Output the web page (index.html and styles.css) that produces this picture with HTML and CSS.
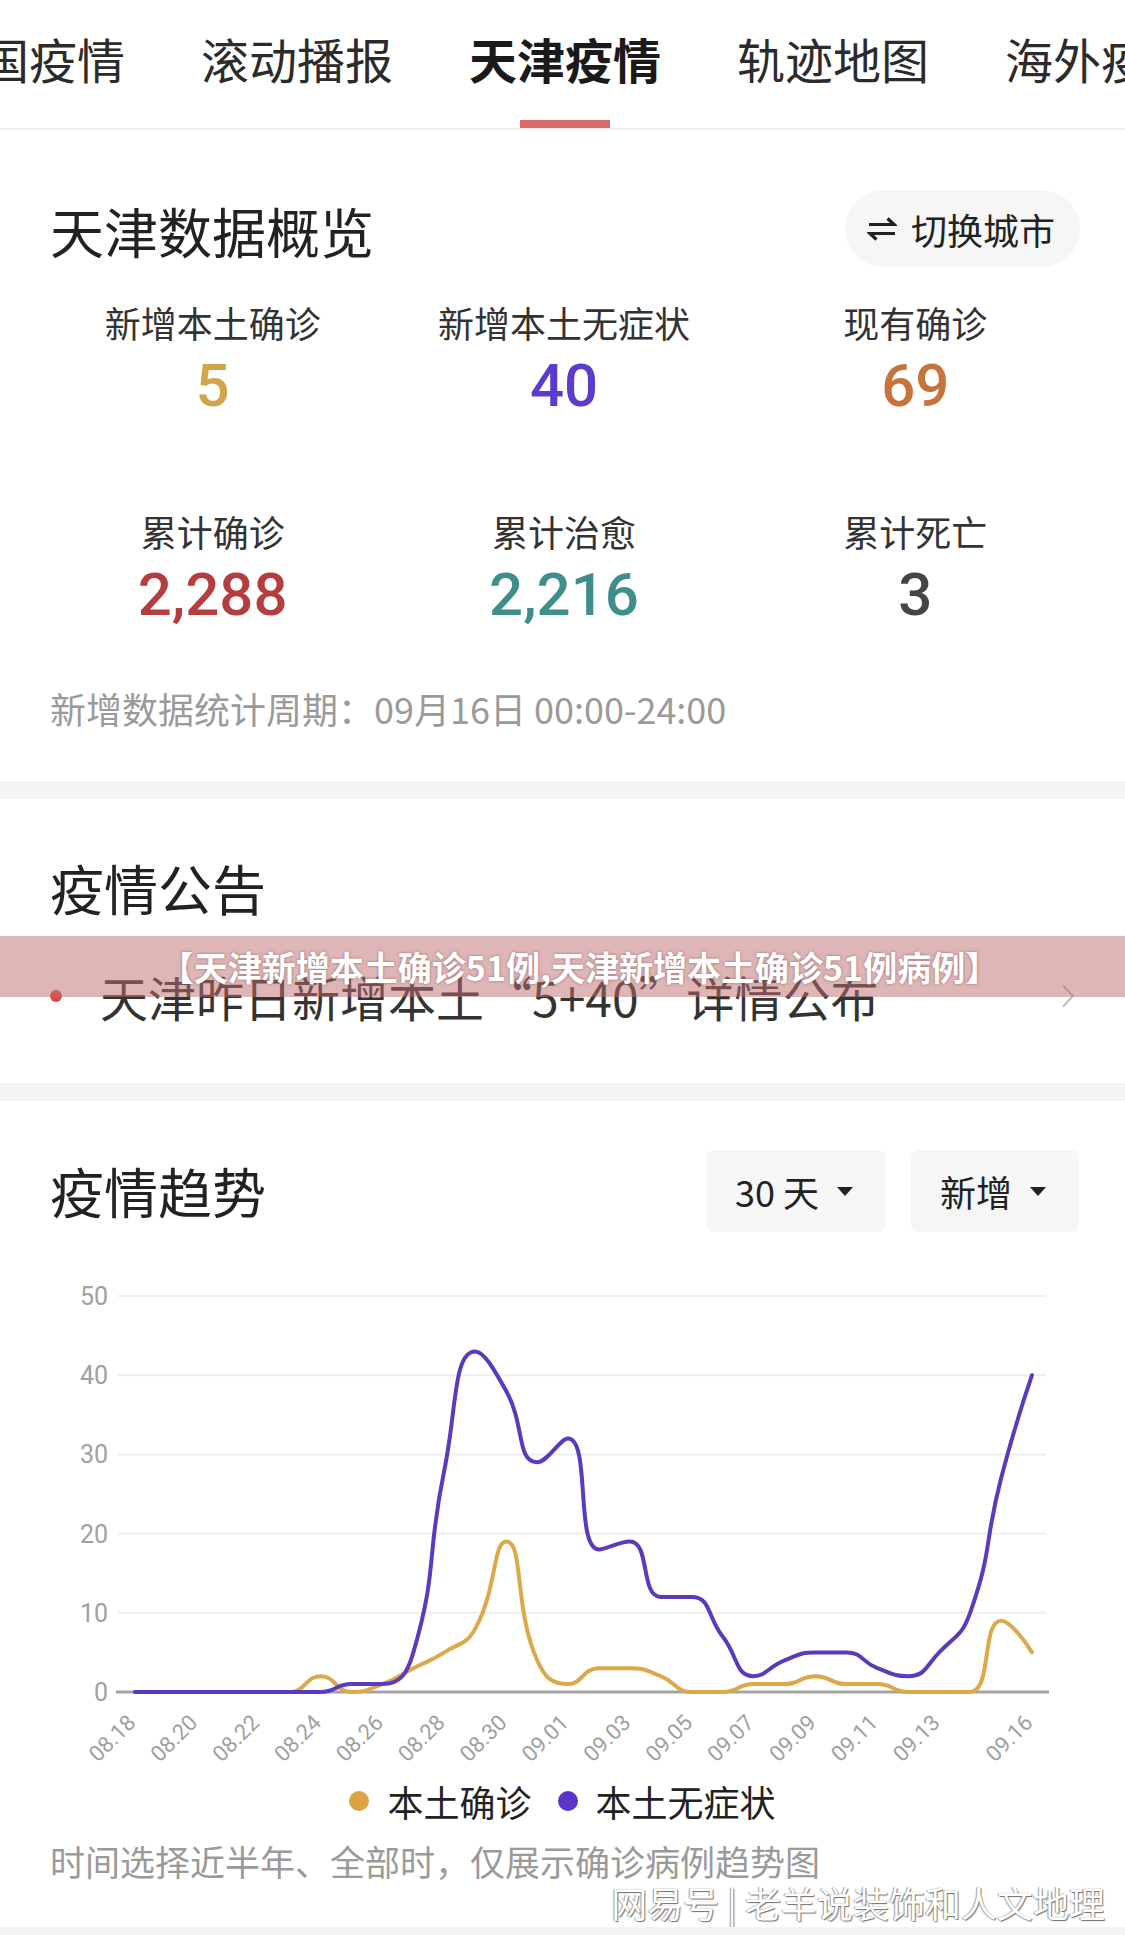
FILE: index.html
```html
<!DOCTYPE html>
<html lang="zh-CN">
<head>
    <meta charset="UTF-8">
    <meta name="viewport" content="width=device-width, initial-scale=1.0">
    <title>天津疫情</title>
    <link rel="stylesheet" href="styles.css">
</head>
<body>
<div class="page">
    <nav class="tabs">
        <div class="tab-row">
            <a class="tab">全国疫情</a>
            <a class="tab">滚动播报</a>
            <a class="tab active">天津疫情</a>
            <a class="tab">轨迹地图</a>
            <a class="tab">海外疫情</a>
        </div>
    </nav>

    <section class="card overview">
        <div class="card-head">
            <h2 class="card-title">天津数据概览</h2>
            <button class="switch-city">
                <svg class="switch-icon" viewBox="0 0 30 24" width="30" height="24">
                    <path d="M2 7.5 H27 L20.5 1.5" />
                    <path d="M28 16.5 H3 L9.5 22.5" />
                </svg>
                切换城市
            </button>
        </div>
        <div class="stats">
            <div class="stat"><div class="stat-label">新增本土确诊</div><div class="stat-num gold">5</div></div>
            <div class="stat"><div class="stat-label">新增本土无症状</div><div class="stat-num purple">40</div></div>
            <div class="stat"><div class="stat-label">现有确诊</div><div class="stat-num orange">69</div></div>
            <div class="stat"><div class="stat-label">累计确诊</div><div class="stat-num red">2,288</div></div>
            <div class="stat"><div class="stat-label">累计治愈</div><div class="stat-num teal">2,216</div></div>
            <div class="stat"><div class="stat-label">累计死亡</div><div class="stat-num dark">3</div></div>
        </div>
        <p class="period">新增数据统计周期：09月16日 00:00-24:00</p>
    </section>

    <section class="card notice">
        <h2 class="card-title">疫情公告</h2>
        <a class="notice-item">
            <span class="notice-dot"></span>
            <span class="notice-text">天津昨日新增本土“5+40”详情公布</span>
            <svg class="chevron" viewBox="0 0 14 24" width="14" height="24">
                <path d="M2 1.5 L12 12 L2 22.5" />
            </svg>
        </a>
    </section>

    <section class="card trend">
        <div class="card-head">
            <h2 class="card-title">疫情趋势</h2>
            <div class="selects">
                <button class="select">30 天 <i class="caret"></i></button>
                <button class="select">新增 <i class="caret"></i></button>
            </div>
        </div>
        <svg id="chart" class="chart" viewBox="0 0 1125 520" width="1125" height="520"></svg>
        <div class="legend">
            <span class="legend-item"><i class="legend-dot gold-bg"></i>本土确诊</span>
            <span class="legend-item"><i class="legend-dot purple-bg"></i>本土无症状</span>
        </div>
        <p class="trend-note">时间选择近半年、全部时，仅展示确诊病例趋势图</p>
    </section>

    <div class="banner">【天津新增本土确诊51例,天津新增本土确诊51例病例】</div>
    <div class="watermark">网易号 | 老羊说装饰和人文地理</div>
</div>

<script>
    var confirmed = [0,0,0,0,0,0,2,0,1,3,5,8,19,4,1,3,3,2,0,0,1,1,2,1,1,0,0,0,9,5];
    var asymptomatic = [0,0,0,0,0,0,0,1,1,5,28,43,38,29,32,18,19,12,12,7,2,4,5,5,3,2,5,10,27,40];

    var svg = document.getElementById('chart');
    var NS = 'http://www.w3.org/2000/svg';
    var x0 = 135, step = (1032 - 135) / 29, y0 = 436, unit = 7.92;

    function px(i) { return x0 + i * step; }
    function py(v) { return y0 - v * unit; }
    function pad(n) { return n < 10 ? '0' + n : '' + n; }

    function el(tag, attrs, text) {
        var node = document.createElementNS(NS, tag);
        for (var k in attrs) node.setAttribute(k, attrs[k]);
        if (text) node.textContent = text;
        svg.appendChild(node);
        return node;
    }

    function clamp(v, a, b) {
        return Math.min(Math.max(v, Math.min(a, b)), Math.max(a, b));
    }

    // same idea as echarts smooth line: control points kept inside each segment's box
    function smoothPath(pts, smooth) {
        var d = 'M' + pts[0][0].toFixed(1) + ',' + pts[0][1].toFixed(1);
        var cx0 = pts[0][0], cy0 = pts[0][1];
        for (var i = 1; i < pts.length; i++) {
            var prev = pts[i - 1], p = pts[i], next = pts[i + 1];
            var cx1 = p[0], cy1 = p[1], nx = p[0], ny = p[1];
            if (next) {
                var l0 = Math.hypot(p[0] - prev[0], p[1] - prev[1]);
                var l1 = Math.hypot(next[0] - p[0], next[1] - p[1]);
                var r = l1 / (l0 + l1);
                nx = clamp(p[0] + (next[0] - prev[0]) * smooth * r, p[0], next[0]);
                ny = clamp(p[1] + (next[1] - prev[1]) * smooth * r, p[1], next[1]);
                cx1 = clamp(p[0] - (nx - p[0]) * l0 / l1, prev[0], p[0]);
                cy1 = clamp(p[1] - (ny - p[1]) * l0 / l1, prev[1], p[1]);
                nx = p[0] + (p[0] - cx1) * l1 / l0;
                ny = p[1] + (p[1] - cy1) * l1 / l0;
            }
            d += ' C' + [cx0, cy0, cx1, cy1, p[0], p[1]].map(function (n) { return n.toFixed(1); }).join(',');
            cx0 = nx; cy0 = ny;
        }
        return d;
    }

    for (var v = 50; v >= 0; v -= 10) {
        if (v > 0) el('line', { x1: 118, x2: 1046, y1: py(v), y2: py(v), 'class': 'grid-line' });
        el('text', { x: 108, y: py(v), dy: '0.36em', 'text-anchor': 'end', 'class': 'axis-label' }, String(v));
    }
    el('line', { x1: 116, x2: 1049, y1: y0, y2: y0, 'class': 'axis-line' });

    for (var i = 0; i < 30; i++) {
        if (i % 2 && i !== 29) continue;
        if (i === 28) continue;
        var day = 18 + i;
        var label = day <= 31 ? '08.' + pad(day) : '09.' + pad(day - 31);
        var lx = px(i) + 2, ly = 468;
        el('text', { x: lx, y: ly, 'text-anchor': 'end', transform: 'rotate(-45 ' + lx + ' ' + ly + ')', 'class': 'date-label' }, label);
    }

    function series(data, cls) {
        var pts = data.map(function (val, idx) { return [px(idx), py(val)]; });
        el('path', { d: smoothPath(pts, 0.5), 'class': 'series ' + cls });
    }
    series(confirmed, 'series-confirmed');
    series(asymptomatic, 'series-asym');
</script>
</body>
</html>
```

FILE: styles.css
```css
* { box-sizing: border-box; }
body { margin: 0; background: #f4f4f4; font-family: "Noto Sans CJK SC", "Noto Sans", sans-serif; color: #222; }
.page { position: relative; width: 1125px; }

.tabs { height: 130px; overflow: hidden; background: #fff; border-bottom: 2px solid #ececec; }
.tab-row { display: flex; gap: 76px; margin-left: -67px; }
.tab { display: flex; flex-direction: column; align-items: center; flex: none; height: 128px; padding-top: 28px; font-size: 48px; line-height: 60px; color: #2b2b2b; white-space: nowrap; }
.tab.active { font-weight: 700; color: #1a1a1a; }
.tab.active::after { content: ""; margin-top: auto; width: 90px; height: 8px; background: #d86a6a; }

.card { background: #fff; padding: 0 50px; margin-bottom: 18px; }
.card-head { display: flex; justify-content: space-between; align-items: flex-start; }
.card-title { margin: 0; font-size: 54px; line-height: 60px; font-weight: 400; color: #222; }

.overview { padding-top: 60px; padding-bottom: 48px; }
.overview .card-title { margin-top: 11px; }
.switch-city { display: flex; align-items: center; gap: 14px; height: 77px; padding: 0 25px 0 22px; margin-right: -5px; border: none; border-radius: 39px; background: #f6f6f6; font-family: inherit; font-size: 36px; color: #222; }
.switch-icon { fill: none; stroke: #222; stroke-width: 3.2; stroke-linejoin: miter; }

.stats { display: grid; grid-template-columns: repeat(3, 1fr); row-gap: 87px; margin: 32px -16px 0 -13px; text-align: center; }
.stat-label { font-size: 36px; line-height: 46px; color: #333; }
.stat-num { margin-top: 6px; font-family: Roboto, "Noto Sans", sans-serif; font-weight: 500; font-size: 60px; line-height: 70px; }
.gold { color: #d0a649; }
.purple { color: #5b3ccf; }
.orange { color: #c7733c; }
.red { color: #b53d3d; }
.teal { color: #3e8f8c; }
.dark { color: #454545; }
.period { margin: 53px 0 0; font-size: 36px; line-height: 50px; color: #9a9a9a; }

.notice { padding-top: 59px; padding-bottom: 55px; }
.notice-item { display: flex; align-items: center; height: 64px; margin-top: 46px; color: #333; text-decoration: none; }
.notice-dot { flex: none; width: 12px; height: 12px; margin-right: 38px; border-radius: 50%; background: #e04848; }
.notice-text { flex: 1; font-size: 48px; line-height: 64px; }
.chevron { fill: none; stroke: #bdbdbd; stroke-width: 2; }

.trend { padding-top: 49px; padding-bottom: 42px; margin-bottom: 0; }
.trend .card-head { align-items: center; }
.selects { display: flex; gap: 25px; margin-right: -4px; }
.select { display: flex; align-items: center; gap: 18px; height: 82px; padding: 0 33px 0 29px; border: none; border-radius: 8px; background: #f6f6f6; font-family: inherit; font-size: 36px; color: #222; }
.caret { width: 0; height: 0; border-left: 8px solid transparent; border-right: 8px solid transparent; border-top: 9px solid #222; }

.chart { display: block; margin: 24px -50px 0; }
.grid-line { stroke: #efefef; stroke-width: 2; }
.axis-line { stroke: #a3a3a3; stroke-width: 3; }
.axis-label { font-family: Roboto, sans-serif; font-size: 25px; fill: #a0a0a0; }
.date-label { font-family: Roboto, sans-serif; font-size: 22px; fill: #a0a0a0; }
.series { fill: none; stroke-width: 4; stroke-linejoin: round; stroke-linecap: round; }
.series-confirmed { stroke: #dda84c; }
.series-asym { stroke: #5a3bbd; }

.legend { display: flex; justify-content: center; gap: 26px; margin-top: 3px; font-size: 36px; line-height: 44px; color: #222; }
.legend-item { display: flex; align-items: center; gap: 18px; }
.legend-dot { width: 20px; height: 20px; border-radius: 50%; }
.gold-bg { background: #dba344; }
.purple-bg { background: #5b35c9; }
.trend-note { margin: 14px 0 0; font-size: 35px; line-height: 48px; color: #9a9a9a; }

.banner { position: absolute; left: 0; right: 0; top: 936px; height: 61px; padding-left: 34px; background: rgba(190, 110, 110, 0.5); color: #fff; font-size: 34px; font-weight: 700; line-height: 61px; text-align: center; text-shadow: 0 0 3px rgba(110, 50, 50, 0.6); }
.watermark { position: absolute; right: 20px; top: 1878px; font-size: 36px; line-height: 48px; color: #fff; text-shadow: 1px 1px 1px #6f6f6f, -1px 0 1px #9a9a9a; }
```
